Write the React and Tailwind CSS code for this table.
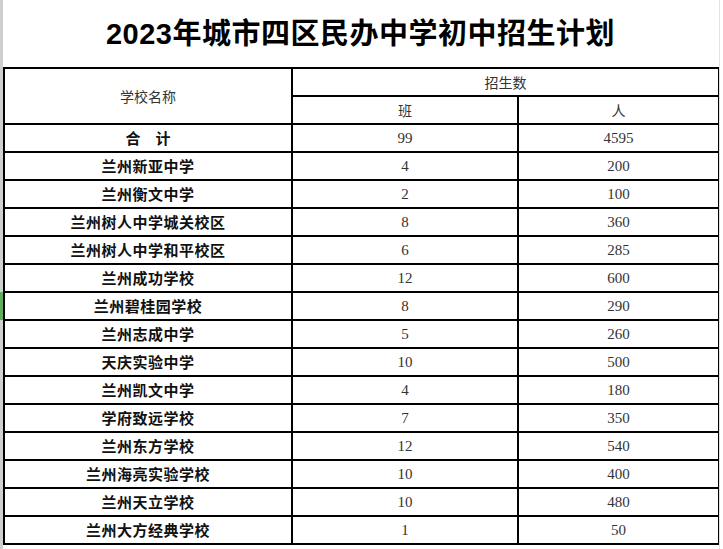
import React from 'react';

const schools = [
    { name: '兰州新亚中学', cls: 4, people: 200 },
    { name: '兰州衡文中学', cls: 2, people: 100 },
    { name: '兰州树人中学城关校区', cls: 8, people: 360 },
    { name: '兰州树人中学和平校区', cls: 6, people: 285 },
    { name: '兰州成功学校', cls: 12, people: 600 },
    { name: '兰州碧桂园学校', cls: 8, people: 290 },
    { name: '兰州志成中学', cls: 5, people: 260 },
    { name: '天庆实验中学', cls: 10, people: 500 },
    { name: '兰州凯文中学', cls: 4, people: 180 },
    { name: '学府致远学校', cls: 7, people: 350 },
    { name: '兰州东方学校', cls: 12, people: 540 },
    { name: '兰州海亮实验学校', cls: 10, people: 400 },
    { name: '兰州天立学校', cls: 10, people: 480 },
    { name: '兰州大方经典学校', cls: 1, people: 50 },
];

const cjk = { fontFamily: '"Noto Sans CJK SC", sans-serif' };
const num = { fontFamily: '"Liberation Serif", "Noto Sans CJK SC", serif' };

const App = () => {
    return (
        <div className="flex w-[723px] h-[549px] bg-white overflow-hidden">
            {/* sheet row-header strip */}
            <div className="w-[3px] shrink-0 bg-[#cfcfcf] flex flex-col">
                <div className="h-[292px]"></div>
                <div className="h-[28px] bg-[#5fae5f]"></div>
            </div>

            <div className="w-[715px] shrink-0">
                <div className="h-[67px] flex items-center justify-center pt-[2px]">
                    <h1
                        className="text-[29px] font-bold text-black tracking-[0.5px]"
                        style={{ fontFamily: '"Liberation Sans", "Noto Sans CJK SC", sans-serif' }}
                    >
                        2023年城市四区民办中学初中招生计划
                    </h1>
                </div>

                <table className="w-[715px] border-collapse table-fixed">
                    <colgroup>
                        <col className="w-[288px]" />
                        <col className="w-[226px]" />
                        <col className="w-[201px]" />
                    </colgroup>
                    <tbody>
                        <tr className="h-[28px]">
                            <td rowSpan={2} className="border-2 border-black text-center text-[14px] text-[#333] p-0" style={cjk}>
                                学校名称
                            </td>
                            <td colSpan={2} className="border-2 border-black text-center text-[14px] text-[#333] p-0" style={cjk}>
                                招生数
                            </td>
                        </tr>
                        <tr className="h-[28px]">
                            <td className="border-2 border-black text-center text-[14px] text-[#333] p-0" style={cjk}>班</td>
                            <td className="border-2 border-black text-center text-[14px] text-[#333] p-0" style={cjk}>人</td>
                        </tr>
                        <tr className="h-[28px]">
                            <td className="border-2 border-black text-center text-[15px] font-bold text-[#111] p-0" style={cjk}>
                                合<span className="inline-block w-[15px]"></span>计
                            </td>
                            <td className="border-2 border-black text-center text-[15px] text-[#333] p-0" style={num}>99</td>
                            <td className="border-2 border-black text-center text-[15px] text-[#333] p-0" style={num}>4595</td>
                        </tr>
                        {schools.map((s) => (
                            <tr key={s.name} className="h-[28px]">
                                <td className="border-2 border-black text-center text-[15px] font-bold text-[#111] tracking-[0.5px] p-0" style={cjk}>
                                    {s.name}
                                </td>
                                <td className="border-2 border-black text-center text-[15px] text-[#333] p-0" style={num}>{s.cls}</td>
                                <td className="border-2 border-black text-center text-[15px] text-[#333] p-0" style={num}>{s.people}</td>
                            </tr>
                        ))}
                    </tbody>
                </table>
            </div>

            <div className="flex-1 flex">
                <div className="w-[1px] ml-[1px] h-full bg-[#e3e3e3]"></div>
            </div>
        </div>
    );
};

export default App;
